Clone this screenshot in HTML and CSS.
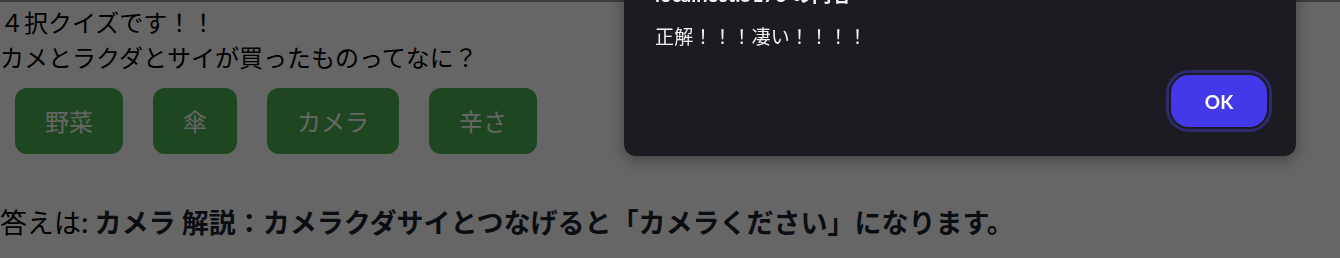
FILE: index.html
```html
<!DOCTYPE html>
<html lang="ja">
<head>
<meta charset="utf-8">
<title>4択クイズ</title>
<link rel="stylesheet" href="styles.css">
</head>
<body>
<main class="quiz">
  <p class="line">４択クイズです！！</p>
  <p class="line">カメとラクダとサイが買ったものってなに？</p>
  <div class="choices">
    <button class="choice">野菜</button>
    <button class="choice">傘</button>
    <button class="choice">カメラ</button>
    <button class="choice">辛さ</button>
  </div>
  <p class="answer">答えは: <strong>カメラ 解説：カメラクダサイとつなげると「カメラください」になります。</strong></p>
</main>
<div class="overlay"></div>
<div class="dialog" role="alertdialog">
  <div class="dialog-title">localhost:5173 の内容</div>
  <div class="dialog-msg">正解！！！凄い！！！！</div>
  <div class="dialog-actions">
    <button class="ok">OK</button>
  </div>
</div>
</body>
</html>
```
FILE: styles.css
```css
html, body {
  margin: 0;
  padding: 0;
  background: #ffffff;
  height: 100%;
  overflow: hidden;
}
body {
  font-family: "Noto Sans CJK JP", "Noto Sans", sans-serif;
  color: #213547;
}
.quiz {
  padding-top: 5px;
  display: flex;
  flex-direction: column;
  align-items: flex-start;
}
.line {
  margin: 0;
  font-size: 24px;
  line-height: 34.75px;
  color: #000;
}
.choices {
  display: flex;
  gap: 30px;
  padding: 13px 15px 15px;
}
.choice {
  height: 66px;
  padding: 0 30px;
  border: none;
  border-radius: 12px;
  background: #4caf50;
  color: #ffffff;
  font-family: "Noto Sans CJK JP", sans-serif;
  font-size: 24px;
  display: flex;
  align-items: center;
  justify-content: center;
}
.answer {
  margin: 33px 0 0 0;
  font-size: 27px;
  line-height: 40px;
  color: #000;
}
.answer strong {
  color: #1a2530;
  font-weight: 700;
}
.overlay {
  position: fixed;
  inset: 0;
  background: rgba(0, 0, 0, 0.6);
  border-top: 2px solid rgba(0, 0, 0, 0.4);
}
.dialog {
  position: absolute;
  top: -22px;
  left: 624px;
  width: 672px;
  box-sizing: border-box;
  padding: 4px 29px 29px 31px;
  background: #1c1b22;
  border-radius: 12px;
  box-shadow: 0 4px 14px rgba(0, 0, 0, 0.35);
  color: #f2f2f2;
  display: flex;
  flex-direction: column;
}
.dialog-title {
  font-family: Lato, "Noto Sans CJK JP", sans-serif;
  font-weight: 700;
  font-size: 20px;
  line-height: 24px;
}
.dialog-msg {
  margin-top: 16px;
  font-family: "Noto Sans CJK JP", sans-serif;
  font-size: 19px;
  letter-spacing: 0.3px;
  line-height: 28px;
}
.dialog-actions {
  display: flex;
  justify-content: flex-end;
  margin-top: 25px;
}
.ok {
  width: 96px;
  height: 52px;
  border: none;
  border-radius: 18px;
  background: #4339e8;
  color: #ffffff;
  font-family: Lato, sans-serif;
  font-weight: 700;
  font-size: 19px;
  outline: 3px solid #2d2b6e;
  outline-offset: 2px;
}
```
